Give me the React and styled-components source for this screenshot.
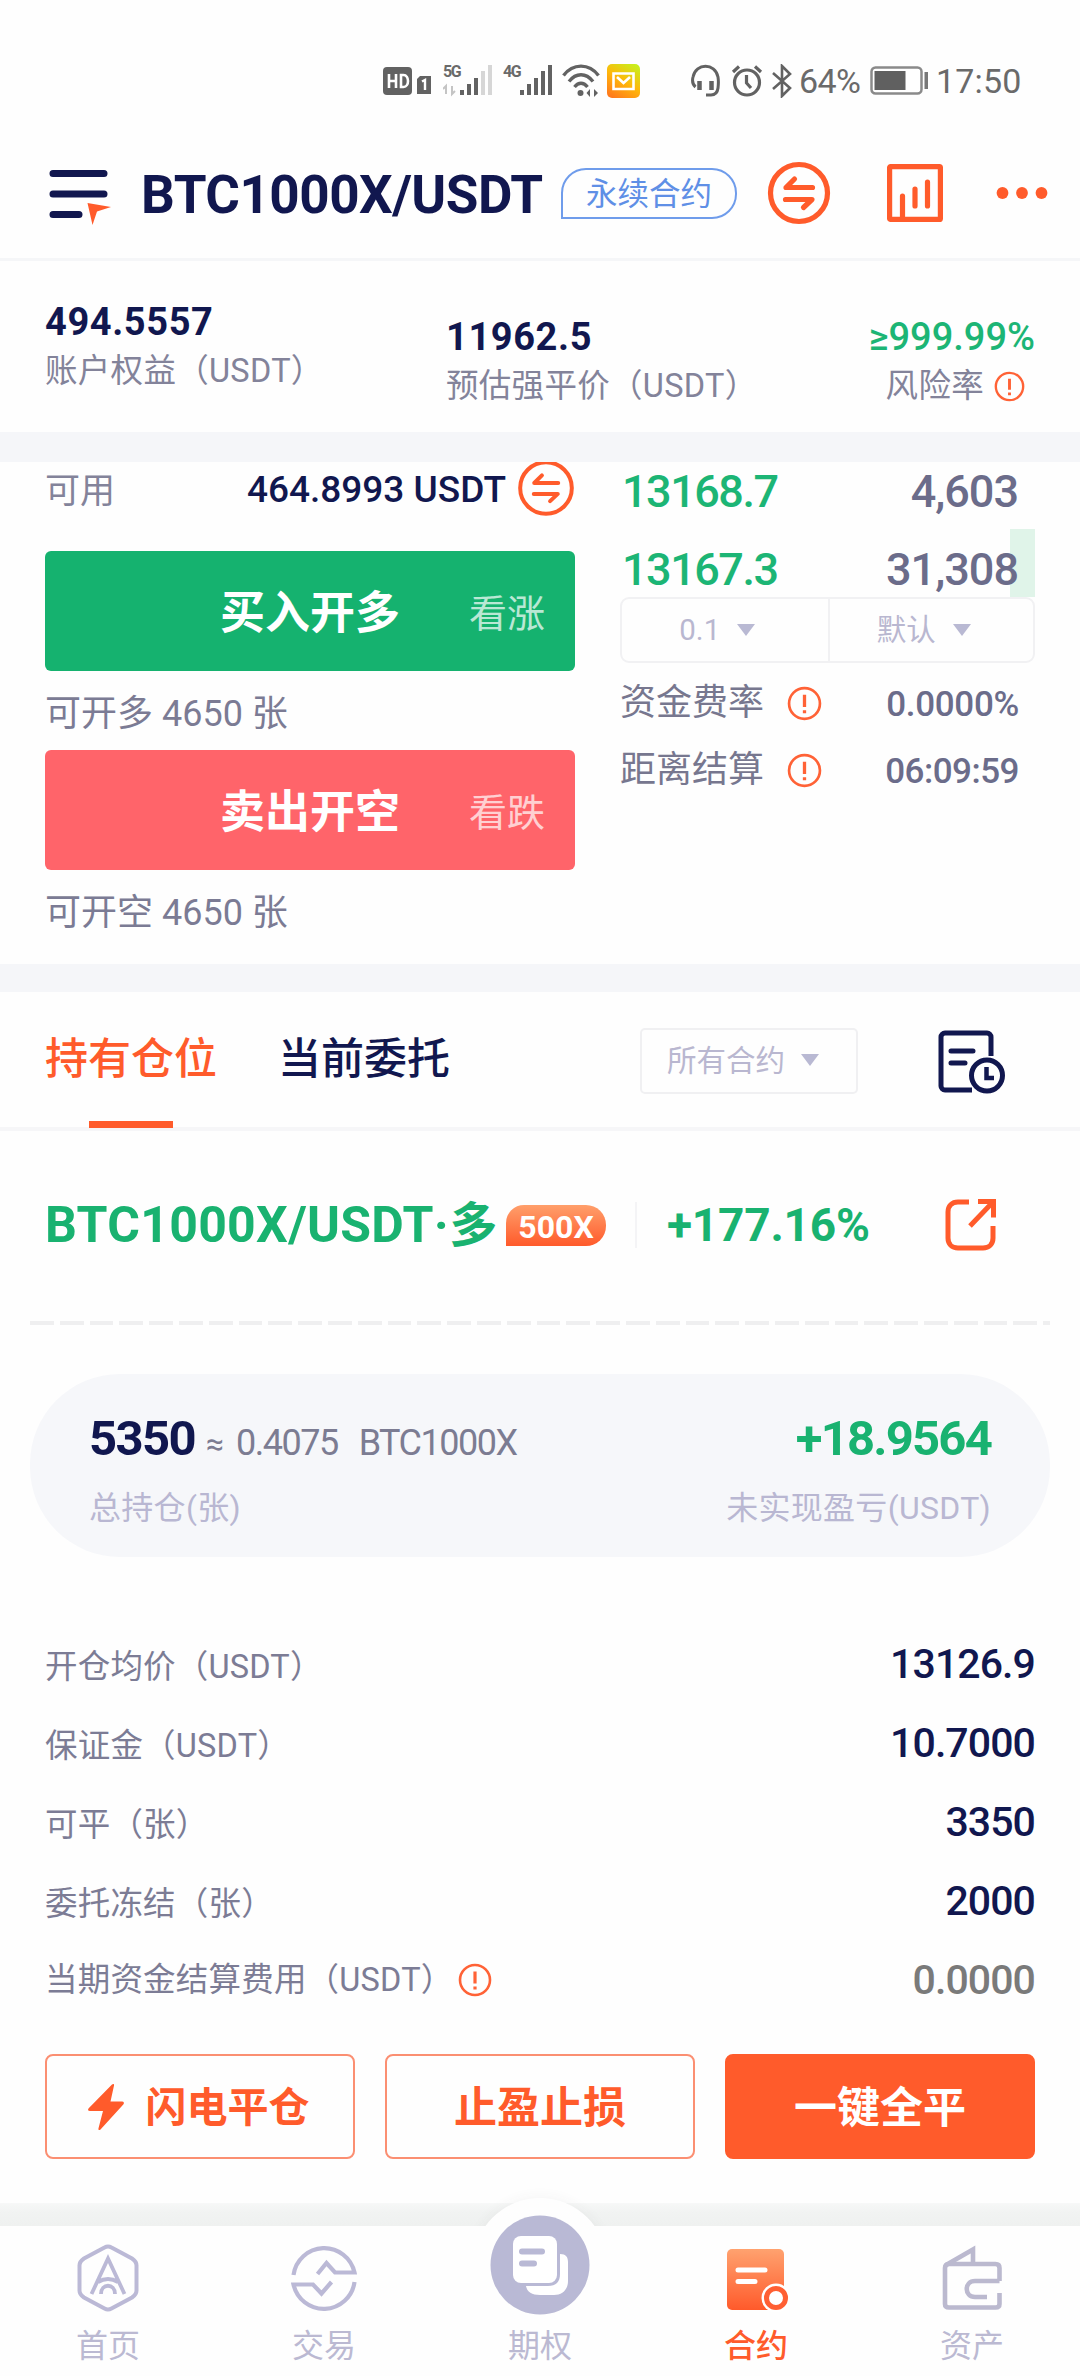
import styled, { createGlobalStyle } from "styled-components"

const details = [
    { label: "开仓均价（USDT）", value: "13126.9" },
    { label: "保证金（USDT）", value: "10.7000" },
    { label: "可平（张）", value: "3350" },
    { label: "委托冻结（张）", value: "2000" },
    { label: "当期资金结算费用（USDT）", value: "0.0000", info: true, muted: true },
]

const orders = [
    { price: "13168.7", amount: "4,603", depth: 0 },
    { price: "13167.3", amount: "31,308", depth: 25 },
]

export default function App() {
    return (
        <Page>
            <GlobalStyle />
            <StatusBar />
            <Header />
            <Stats>
                <Stat>
                    <StatValue $spacing={0.6}>494.5557</StatValue>
                    <StatLabel>账户权益（USDT）</StatLabel>
                </Stat>
                <Stat $lower>
                    <StatValue $spacing={0.6}>11962.5</StatValue>
                    <StatLabel>预估强平价（USDT）</StatLabel>
                </Stat>
                <Stat $lower $end>
                    <StatValue $green>≥999.99%</StatValue>
                    <StatLabel $inset>
                        风险率
                        <InfoIcon size={31} />
                    </StatLabel>
                </Stat>
            </Stats>
            <Band $height={30} />
            <Trade>
                <TradeSide>
                    <Available>
                        <AvailableLabel>可用</AvailableLabel>
                        <AvailableValue>464.8993 USDT</AvailableValue>
                        <SwapIcon size={58} stroke={4.4} />
                    </Available>
                    <OrderButton $color="#15b26f">
                        买入开多
                        <OrderHint>看涨</OrderHint>
                    </OrderButton>
                    <OrderNote>可开多 4650 张</OrderNote>
                    <OrderButton $color="#ff646a">
                        卖出开空
                        <OrderHint>看跌</OrderHint>
                    </OrderButton>
                    <OrderNote>可开空 4650 张</OrderNote>
                </TradeSide>
                <BookSide>
                    <Book>
                        {orders.map((order) => (
                            <BookRow key={order.price}>
                                <Depth style={{ width: order.depth }} />
                                <BookPrice>{order.price}</BookPrice>
                                <BookAmount>{order.amount}</BookAmount>
                            </BookRow>
                        ))}
                    </Book>
                    <BookFilters>
                        <BookFilter>
                            0.1
                            <Caret />
                        </BookFilter>
                        <BookFilter>
                            默认
                            <Caret />
                        </BookFilter>
                    </BookFilters>
                    <FundingRow>
                        资金费率
                        <InfoIcon size={35} />
                        <FundingValue $spacing={-0.3}>0.0000%</FundingValue>
                    </FundingRow>
                    <FundingRow>
                        距离结算
                        <InfoIcon size={35} />
                        <FundingValue $spacing={-0.5}>06:09:59</FundingValue>
                    </FundingRow>
                </BookSide>
            </Trade>
            <Band $height={28} />
            <Tabs>
                <Tab $active>持有仓位</Tab>
                <Tab>当前委托</Tab>
                <ContractFilter>
                    所有合约
                    <Caret />
                </ContractFilter>
                <HistoryIcon />
            </Tabs>
            <PositionHeader>
                <PositionName>
                    BTC1000X/USDT·<Direction>多</Direction>
                </PositionName>
                <Leverage>500X</Leverage>
                <Separator />
                <Profit>+177.16%</Profit>
                <ShareIcon />
            </PositionHeader>
            <DashedLine />
            <Summary>
                <SummaryRow>
                    <Holding>5350</Holding>
                    <Approx>≈</Approx>
                    <Converted>0.4075</Converted>
                    <Converted>BTC1000X</Converted>
                    <Unrealized>+18.9564</Unrealized>
                </SummaryRow>
                <SummaryRow $labels>
                    <span>总持仓(张)</span>
                    <span>未实现盈亏(USDT)</span>
                </SummaryRow>
            </Summary>
            <Details>
                {details.map((item) => (
                    <DetailRow key={item.label}>
                        <DetailLabel $lower={!item.info}>
                            {item.label}
                            {item.info && <InfoIcon size={34} />}
                        </DetailLabel>
                        <DetailValue $muted={item.muted}>{item.value}</DetailValue>
                    </DetailRow>
                ))}
            </Details>
            <Actions>
                <Action $size={41}>
                    <BoltIcon />
                    闪电平仓
                </Action>
                <Action>止盈止损</Action>
                <Action $filled>一键全平</Action>
            </Actions>
            <NavShadow />
            <Nav>
                <NavItem>
                    <HomeIcon />
                    首页
                </NavItem>
                <NavItem>
                    <ExchangeIcon />
                    交易
                </NavItem>
                <NavItem>
                    <NavBump>
                        <OptionsIcon />
                    </NavBump>
                    <NavIconSpace />
                    期权
                </NavItem>
                <NavItem $active>
                    <ContractIcon />
                    合约
                </NavItem>
                <NavItem>
                    <WalletIcon />
                    资产
                </NavItem>
            </Nav>
        </Page>
    )
}

function StatusBar() {
    return (
        <StatusWrapper>
            <svg width="49" height="34" viewBox="0 0 49 34" fill="#626262">
                <rect x="0" y="3" width="29" height="28" rx="4" />
                <path d="M6 10v14M6 17h7M13 10v14M18 11v12h2.500c6 0 6-12 0-12z" fill="none" stroke="#fff" strokeWidth="2.600" />
                <path d="M37 12h11v18H34V15z" />
                <path d="M39 17.500l3-1.500v10" fill="none" stroke="#fff" strokeWidth="2.400" />
            </svg>
            <Signal>
                <SignalText>5G</SignalText>
                <svg width="50" height="34" viewBox="0 0 50 34" fill="#626262">
                    <path d="M3 30v-8l-3 3M9 22v8l3-3" fill="none" stroke="#c4c4c4" strokeWidth="2" />
                    <rect x="17" y="26" width="4" height="5" />
                    <rect x="24" y="20" width="4" height="11" />
                    <rect x="31" y="14" width="4" height="17" />
                    <rect x="38" y="7" width="4" height="24" fill="#d6d6d6" />
                    <rect x="45" y="1" width="4" height="30" fill="#d6d6d6" />
                </svg>
            </Signal>
            <Signal>
                <SignalText>4G</SignalText>
                <svg width="50" height="34" viewBox="0 0 50 34" fill="#626262">
                    <rect x="17" y="26" width="4" height="5" />
                    <rect x="24" y="20" width="4" height="11" />
                    <rect x="31" y="14" width="4" height="17" />
                    <rect x="38" y="7" width="4" height="24" />
                    <rect x="45" y="1" width="4" height="30" />
                </svg>
            </Signal>
            <StatusIcon $left={9} width="38" height="34" viewBox="0 0 38 34" fill="none" stroke="#626262" strokeWidth="3.400">
                <path d="M1.500 11.500C11-1 27-1 36.500 11.500M7 17.500c7-9 17-9 24 0M12.500 23c4-5 9-5 13 0" />
                <circle cx="18.500" cy="29" r="3" fill="#626262" stroke="none" />
                <path d="M28 25l-3.500 4 3.500 4zM32 25l4 4-4 4z" fill="#626262" stroke="none" />
            </StatusIcon>
            <StatusIcon $left={7} width="33" height="34" viewBox="0 0 33 34">
                <defs>
                    <linearGradient id="mail" x1="0.200" y1="1" x2="0.800" y2="0">
                        <stop offset="0" stopColor="#ff7a1c" />
                        <stop offset="0.500" stopColor="#ffb70a" />
                        <stop offset="1" stopColor="#c9ee1c" />
                    </linearGradient>
                </defs>
                <rect width="33" height="34" rx="5" fill="url(#mail)" />
                <path d="M6.500 9.500h20v15.500h-20zM10 13l6.500 6 6.500-6" fill="none" stroke="#fff" strokeWidth="2.600" />
            </StatusIcon>
            <StatusIcon $left={51} width="29" height="34" viewBox="0 0 29 34" fill="none" stroke="#626262" strokeWidth="3">
                <path d="M4.500 23C1 20 1.500 15 2 13 5-1.500 24-1.500 27 13c.5 3 .5 7 0 11-.5 4-3 7-7 7h-5" />
                <path d="M8.500 17v9M20.500 17v9" strokeWidth="4.500" />
            </StatusIcon>
            <StatusIcon $left={11} width="32" height="34" viewBox="0 0 32 34" fill="none" stroke="#626262" strokeWidth="3.200">
                <circle cx="16" cy="18.500" r="12.500" />
                <path d="M2 8l6-5.500M30 8l-6-5.500M15.500 11v8l4.500 5" />
            </StatusIcon>
            <StatusIcon $left={8} width="23" height="34" viewBox="0 0 23 34" fill="none" stroke="#626262" strokeWidth="2.600">
                <path d="M2 9l17 15-8 8V2l8 8L2 25" />
            </StatusIcon>
            <StatusText $width={64} $spacing={-0.6}>64%</StatusText>
            <StatusIcon $left={7} width="59" height="30" viewBox="0 0 59 30">
                <rect x="1.500" y="1.500" width="50" height="26" rx="4" fill="#fff" stroke="#8a8a8a" strokeWidth="2.500" />
                <rect x="4.500" y="5" width="31" height="19" fill="#606060" />
                <rect x="54.500" y="6" width="3.500" height="17" fill="#777" />
            </StatusIcon>
            <StatusText $width={92} $left={7} $spacing={0.2}>17:50</StatusText>
        </StatusWrapper>
    )
}

function Header() {
    return (
        <HeaderWrapper>
            <MenuIcon width="64" height="58" viewBox="0 0 64 58">
                <path d="M5 5.500h51M5 26h51M5 46.500h26" stroke="#11174f" strokeWidth="7" strokeLinecap="round" />
                <path d="M39.500 35L63 39l-14 4.500L44.500 57z" fill="#ff5b2b" />
            </MenuIcon>
            <HeaderTitle>BTC1000X/USDT</HeaderTitle>
            <HeaderTag>永续合约</HeaderTag>
            <HeaderIcons>
                <SwapIcon size={64} stroke={5.2} />
                <svg width="56" height="58" viewBox="0 0 56 58" fill="none" stroke="#ff5b2b" strokeWidth="5.200">
                    <rect x="2.600" y="2.600" width="50.800" height="52.800" rx="1" />
                    <path d="M15.500 53V32M28 42V25M40.500 42V18" strokeLinecap="round" />
                </svg>
                <svg width="52" height="14" viewBox="0 0 52 14" fill="#ff5b2b">
                    <circle cx="6.500" cy="7" r="5.900" />
                    <circle cx="26" cy="7" r="5.900" />
                    <circle cx="45.500" cy="7" r="5.900" />
                </svg>
            </HeaderIcons>
        </HeaderWrapper>
    )
}

function SwapIcon({ size, stroke }) {
    return (
        <svg width={size} height={size} viewBox="0 0 64 64" fill="none" stroke="#ff5b2b" strokeWidth={stroke}>
            <circle cx="32" cy="32" r="28.500" />
            <path d="M45.500 26.500H19L27.500 18M18.500 38.500H45L36.500 46.500" strokeLinecap="round" strokeLinejoin="round" />
        </svg>
    )
}

function InfoIcon({ size }) {
    return (
        <svg width={size} height={size} viewBox="0 0 34 34" fill="none" stroke="#ff6236">
            <circle cx="17" cy="17" r="15" strokeWidth="2.600" />
            <path d="M17 8.500v12M17 23.500v3" strokeWidth="3.200" />
        </svg>
    )
}

function HistoryIcon() {
    return (
        <svg width="68" height="64" viewBox="0 0 68 64" fill="none" stroke="#11174f" strokeWidth="5">
            <path d="M34 60H7a4 4 0 0 1-4-4V7a4 4 0 0 1 4-4h42a4 4 0 0 1 4 4v19" />
            <path d="M13 21h22M13 33h14" strokeLinecap="round" />
            <circle cx="49" cy="45.500" r="15.500" />
            <path d="M48.500 37v11h7.500" strokeWidth="4.500" />
        </svg>
    )
}

function ShareIcon() {
    return (
        <svg width="52" height="54" viewBox="0 0 52 54" fill="none" stroke="#ff5b2b" strokeWidth="5">
            <path d="M24 4H13C7 4 3 8 3 14v26c0 6 4 10 10 10h25c6 0 10-4 10-10V28" />
            <path d="M33 3.500h15.500v16M47.500 4.500L25 28" />
        </svg>
    )
}

function BoltIcon() {
    return (
        <svg width="38" height="48" viewBox="0 0 38 48" fill="#ff5b2b">
            <path d="M25 1.500c1.200-1 2.500-.5 2 1L23.500 18.500H35c2 0 2.500 1.500 1.300 3L13.500 46.500c-1.300 1.200-2.500.5-2-1.200L16 28H3c-2 0-2.500-1.500-1.300-2.800z" />
        </svg>
    )
}

function HomeIcon() {
    return (
        <svg width="62" height="68" viewBox="0 0 62 68" fill="none" stroke="#bbb9d6" strokeWidth="4">
            <path d="M27.500 3.500q3.500-2 7 0L55 14.500q4.500 3 4.500 7v25q0 4-4.500 7L34.500 64.500q-3.500 2-7 0L7 53.500q-4.500-3-4.500-7v-25q0-4 4.500-7z" />
            <path d="M14.500 50L31 14.500 47.500 50M21 38q10-6 20 0M24 50c0-11 14-11 14 0" strokeWidth="3.800" />
        </svg>
    )
}

function ExchangeIcon() {
    return (
        <svg width="66" height="68" viewBox="0 0 66 68" fill="none" stroke="#bbb9d6" strokeWidth="4.200">
            <path d="M2.500 31A31 31 0 0 1 63.500 28.500H44l-8.500-9.500L26.500 30" />
            <path d="M63.500 38A31 31 0 0 1 2.500 40.500h19.500l8.500 9L40.500 38" />
        </svg>
    )
}

function OptionsIcon() {
    return (
        <svg width="100" height="100" viewBox="0 0 100 100">
            <circle cx="50" cy="50" r="49.500" fill="#b9b9d5" />
            <path d="M70 39c6 0 8 3 8 8v19c0 9-6 14-14 14H50c-8 0-13-3-14-9h22c8 0 12-4 12-12z" fill="#fff" />
            <rect x="23" y="21" width="44" height="47" rx="8" fill="#fff" />
            <path d="M32 36.500h20M32 48.500h12" stroke="#b9b9d5" strokeWidth="6" strokeLinecap="round" />
        </svg>
    )
}

function ContractIcon() {
    return (
        <svg width="64" height="68" viewBox="0 0 64 68">
            <defs>
                <linearGradient id="contract" x1="0" y1="0" x2="0" y2="1">
                    <stop offset="0" stopColor="#ffa26f" />
                    <stop offset="1" stopColor="#ff5a2b" />
                </linearGradient>
            </defs>
            <rect x="3" y="5" width="57" height="61" rx="5" fill="url(#contract)" />
            <path d="M14 26h27M14 37.500h17" stroke="#fff" strokeWidth="5" strokeLinecap="round" />
            <circle cx="52" cy="54" r="14.500" fill="#fff" />
            <circle cx="52" cy="54" r="9.500" fill="#fff" stroke="#ff5f33" strokeWidth="5" />
        </svg>
    )
}

function WalletIcon() {
    return (
        <svg width="60" height="68" viewBox="0 0 60 68" fill="none" stroke="#bbb9cf" strokeWidth="4.600">
            <path d="M57.500 37V24q0-4-4-4H7q-4 0-4 4v36q0 3.500 4 3.500h46.500q4 0 4-3.500V49" />
            <path d="M4 21L31 5.500V20M57.500 37H33c-11 0-11 16 0 16h12" />
        </svg>
    )
}

const GlobalStyle = createGlobalStyle`
    * {
        box-sizing: border-box;
    }

    body {
        margin: 0;
        background-color: #fefefe;
        font-family: Roboto, "Noto Sans CJK SC", sans-serif;
    }

    button {
        font-family: inherit;
    }

    svg {
        display: block;
        flex-shrink: 0;
    }
`

const Page = styled.div`
    width: 1080px;
    height: 2376px;
    overflow: hidden;
    background-color: #fefefe;
    color: #11174f;
    white-space: nowrap;
`

const StatusWrapper = styled.div`
    height: 128px;
    padding: 34px 0 0 383px;
    display: flex;
    align-items: center;
    color: #6a6a6a;
`

const Signal = styled.div`
    position: relative;
    width: 50px;
    margin-left: 11px;

    & + & {
        margin-left: 10px;
    }
`

const SignalText = styled.span`
    position: absolute;
    top: -1px;
    left: 0;
    font-size: 16px;
    font-weight: 700;
    line-height: 18px;
    letter-spacing: -1.5px;
`

const StatusIcon = styled.svg`
    margin-left: ${({ $left }) => $left}px;
`

const StatusText = styled.span`
    width: ${({ $width }) => $width}px;
    margin-left: ${({ $left = 5 }) => $left}px;
    font-size: 34px;
    line-height: 40px;
    letter-spacing: ${({ $spacing }) => $spacing}px;
`

const HeaderWrapper = styled.header`
    height: 133px;
    padding: 0 30px 0 48px;
    display: flex;
    align-items: center;
    border-bottom: 3px solid #f5f6f8;
`

const MenuIcon = styled.svg`
    margin-top: 7px;
`

const HeaderTitle = styled.h1`
    width: 400px;
    margin: 3px 0 0 29px;
    font-size: 53px;
    font-weight: 700;
    line-height: 64px;
    letter-spacing: -0.5px;
`

const HeaderTag = styled.span`
    width: 176px;
    height: 51px;
    margin-left: 20px;
    border: 2px solid #6f9ceb;
    border-radius: 25px 25px 25px 0;
    color: #5f8fe6;
    font-size: 31.5px;
    line-height: 49px;
    text-align: center;
`

const HeaderIcons = styled.div`
    display: flex;
    align-items: center;
    margin-left: 30px;

    svg + svg {
        margin-left: 56px;
    }

    svg:last-child {
        margin-left: 53px;
    }
`

const Stats = styled.section`
    height: 171px;
    padding: 39px 45px 0;
    display: grid;
    grid-template-columns: 401px 1fr auto;
`

const Stat = styled.div`
    display: flex;
    flex-direction: column;
    align-items: ${({ $end }) => ($end ? "flex-end" : "flex-start")};
    margin-top: ${({ $lower }) => ($lower ? 15 : 0)}px;
`

const StatValue = styled.div`
    color: ${({ $green }) => ($green ? "#1cb575" : "#11174f")};
    font-size: 38px;
    font-weight: ${({ $green }) => ($green ? 500 : 700)};
    line-height: 45px;
    letter-spacing: ${({ $spacing = 0 }) => $spacing}px;
`

const StatLabel = styled.div`
    display: flex;
    align-items: center;
    gap: 10px;
    margin-right: ${({ $inset }) => ($inset ? 10 : 0)}px;
    color: #83839a;
    font-size: 32.5px;
    line-height: 52px;
    letter-spacing: 0.3px;
`

const Band = styled.div`
    height: ${({ $height }) => $height}px;
    background-color: #f5f6f9;
`

const Trade = styled.section`
    height: 502px;
    padding: 0 45px;
    display: flex;
    justify-content: space-between;
    overflow: hidden;
`

const TradeSide = styled.div`
    width: 530px;
`

const Available = styled.div`
    height: 52px;
    margin-bottom: 37px;
    display: flex;
    align-items: center;
`

const AvailableLabel = styled.span`
    margin-top: 7px;
    color: #83839a;
    font-size: 35px;
    line-height: 48px;
`

const AvailableValue = styled.span`
    margin: 4px 11px 0 auto;
    font-size: 37px;
    font-weight: 500;
    line-height: 48px;
`

const OrderButton = styled.button`
    position: relative;
    display: block;
    width: 100%;
    height: 120px;
    padding: 0;
    border: none;
    border-radius: 6px;
    background-color: ${({ $color }) => $color};
    color: #fff;
    font-size: 45px;
    font-weight: 700;
    line-height: 126px;
`

const OrderHint = styled.span`
    position: absolute;
    top: 0;
    right: 30px;
    font-size: 38px;
    font-weight: 400;
    opacity: 0.7;
`

const OrderNote = styled.div`
    height: 79px;
    padding-top: 3px;
    color: #7b7b94;
    font-size: 36px;
    line-height: 81px;
`

const BookSide = styled.div`
    width: 415px;
`

const Book = styled.div`
    margin-top: -11px;
    display: flex;
    flex-direction: column;
    gap: 10px;
`

const BookRow = styled.div`
    position: relative;
    height: 68px;
    padding: 13px 17px 0 2px;
    display: flex;
    justify-content: space-between;
    font-size: 45px;
    font-weight: 500;
    line-height: 56px;
`

const Depth = styled.div`
    position: absolute;
    top: 0;
    right: 0;
    height: 68px;
    background-color: #e0f4e9;
`

const BookPrice = styled.span`
    position: relative;
    color: #1cb575;
    letter-spacing: -1.5px;
`

const BookAmount = styled.span`
    position: relative;
    color: #6b6c8a;
    letter-spacing: -1px;
`

const BookFilters = styled.div`
    height: 66px;
    display: grid;
    grid-template-columns: 1fr 1fr;
    border: 2px solid #f1f1f3;
    border-radius: 9px;
`

const BookFilter = styled.div`
    display: flex;
    justify-content: center;
    align-items: center;
    gap: 17px;
    padding-right: 15px;
    color: #b9b7d0;
    font-size: 29.5px;
    line-height: 62px;

    & + & {
        border-left: 2px solid #f1f1f3;
    }
`

const Caret = styled.span`
    margin-top: -1px;
    border: 9px solid transparent;
    border-top: 12px solid #b9b9d3;
    border-bottom: none;
`

const FundingRow = styled.div`
    height: 67px;
    padding-right: 16px;
    display: flex;
    align-items: center;
    gap: 23px;
    color: #77778f;
    font-size: 36px;
    line-height: 67px;

    ${BookFilters} + & {
        margin-top: 7px;
    }
`

const FundingValue = styled.span`
    margin: 2px 0 0 auto;
    color: #6b6c8a;
    font-size: 35px;
    font-weight: 500;
    letter-spacing: ${({ $spacing }) => $spacing}px;
`

const Tabs = styled.nav`
    height: 139px;
    padding: 0 74px 0 45px;
    display: flex;
    align-items: center;
    border-bottom: 4px solid #f6f6f8;

    svg {
        margin: 4px 0 0 80px;
    }
`

const Tab = styled.div`
    position: relative;
    margin-right: 61px;
    color: ${({ $active }) => ($active ? "#ff5b2b" : "#11174f")};
    font-size: 43px;
    font-weight: 500;
    line-height: 137px;

    &::after {
        content: "";
        display: ${({ $active }) => ($active ? "block" : "none")};
        position: absolute;
        bottom: 0;
        left: 44px;
        width: 84px;
        height: 7px;
        background-color: #ff5b2b;
    }
`

const ContractFilter = styled.div`
    width: 218px;
    height: 66px;
    margin: 2px 0 0 auto;
    padding-right: 12px;
    display: flex;
    justify-content: center;
    align-items: center;
    gap: 16px;
    border: 2px solid #f0f0f2;
    border-radius: 5px;
    color: #b9b7d0;
    font-size: 29.5px;
    line-height: 64px;
`

const PositionHeader = styled.div`
    height: 190px;
    padding: 0 83px 2px 45px;
    display: flex;
    align-items: center;
    color: #19b270;
`

const PositionName = styled.h2`
    width: 461px;
    margin: 0;
    font-size: 50px;
    font-weight: 700;
    line-height: 64px;
    letter-spacing: 0.3px;
`

const Direction = styled.span`
    font-size: 48px;
    letter-spacing: 0;
`

const Leverage = styled.span`
    width: 100px;
    height: 41px;
    border-radius: 18px 20px 20px 0;
    background: linear-gradient(#ff9f6b, #ff5a2b);
    color: #fff;
    font-size: 32px;
    font-weight: 700;
    line-height: 44px;
    text-align: center;
`

const Separator = styled.span`
    width: 2px;
    height: 46px;
    margin-left: 29px;
    background-color: #f4f4f6;
`

const Profit = styled.span`
    margin-left: 30px;
    font-size: 46px;
    font-weight: 700;
    line-height: 60px;
    letter-spacing: -0.2px;

    & + svg {
        margin-left: auto;
    }
`

const DashedLine = styled.div`
    height: 4px;
    margin: 0 30px;
    background: repeating-linear-gradient(90deg, #efeff0 0 23.8px, transparent 23.8px 29.8px);
`

const Summary = styled.section`
    height: 183px;
    margin: 49px 30px 0;
    padding: 40px 59px 0;
    border-radius: 90px;
    background-color: #f6f7fa;
`

const SummaryRow = styled.div`
    height: 50px;
    display: flex;
    align-items: baseline;
    justify-content: ${({ $labels }) => ($labels ? "space-between" : "flex-start")};
    margin-top: ${({ $labels }) => ($labels ? 19 : 0)}px;
    color: #b9b7d2;
    font-size: 32px;
    line-height: 50px;
    letter-spacing: ${({ $labels }) => ($labels ? 0.3 : 0)}px;
`

const Holding = styled.span`
    width: 107px;
    color: #11174f;
    font-size: 49px;
    font-weight: 700;
    letter-spacing: -1.6px;
`

const Approx = styled.span`
    width: 40px;
    padding-left: 10px;
    color: #7c7c92;
    font-size: 32px;
`

const Converted = styled.span`
    margin-right: 21px;
    color: #7c7c92;
    font-size: 36px;
    letter-spacing: -1.5px;
`

const Unrealized = styled.span`
    margin-left: auto;
    color: #19b270;
    font-size: 49px;
    font-weight: 700;
    letter-spacing: -1.8px;
`

const Details = styled.section`
    padding: 67px 45px 0;
`

const DetailRow = styled.div`
    height: 79px;
    display: flex;
    justify-content: space-between;
    align-items: center;
`

const DetailLabel = styled.span`
    display: flex;
    align-items: center;
    gap: 5px;
    padding-top: ${({ $lower }) => ($lower ? 6 : 0)}px;
    color: #7c7c95;
    font-size: 32.5px;
    line-height: 60px;
    letter-spacing: 0.2px;
`

const DetailValue = styled.span`
    color: ${({ $muted }) => ($muted ? "#7a7a7a" : "#11174f")};
    font-size: 41px;
    font-weight: 500;
    letter-spacing: -0.9px;
`

const Actions = styled.div`
    padding: 35px 45px 0;
    display: grid;
    grid-template-columns: repeat(3, 1fr);
    gap: 30px;
`

const Action = styled.button`
    height: 105px;
    padding: 3px 0 0;
    display: flex;
    justify-content: center;
    align-items: center;
    gap: 21px;
    border: 2px solid ${({ $filled }) => ($filled ? "#ff5b2b" : "#fb8f72")};
    border-radius: 8px;
    background-color: ${({ $filled }) => ($filled ? "#ff5b2b" : "#fefefe")};
    color: ${({ $filled }) => ($filled ? "#fff" : "#ff5b2b")};
    font-size: ${({ $size = 43 }) => $size}px;
    font-weight: 700;
    line-height: 98px;

    svg {
        margin: -3px 0 0 -4px;
    }
`

const NavShadow = styled.div`
    height: 23px;
    margin-top: 44px;
    background: linear-gradient(#f7f8f8, #f1f3f2 40%, #eff1f0);
`

const Nav = styled.nav`
    position: relative;
    height: 150px;
    padding-top: 18px;
    display: grid;
    grid-template-columns: repeat(5, 1fr);
    background-color: #fefefe;
`

const NavItem = styled.div`
    position: relative;
    display: flex;
    flex-direction: column;
    align-items: center;
    gap: 14px;
    color: ${({ $active }) => ($active ? "#ff5b2b" : "#bbb9d2")};
    font-size: 32px;
    font-weight: ${({ $active }) => ($active ? 500 : 400)};
    line-height: 40px;
`

const NavIconSpace = styled.div`
    height: 68px;
`

const NavBump = styled.div`
    position: absolute;
    top: -46px;
    left: 41px;
    width: 134px;
    height: 134px;
    display: flex;
    justify-content: center;
    align-items: center;

    svg {
        position: relative;
    }

    /* only the part above the bar casts a shadow */
    &::before {
        content: "";
        position: absolute;
        inset: 0;
        border-radius: 50%;
        background-color: #fefefe;
        box-shadow: 0 0 14px rgba(60, 70, 65, 0.06);
        clip-path: inset(-20px -20px 106px -20px);
    }
`
